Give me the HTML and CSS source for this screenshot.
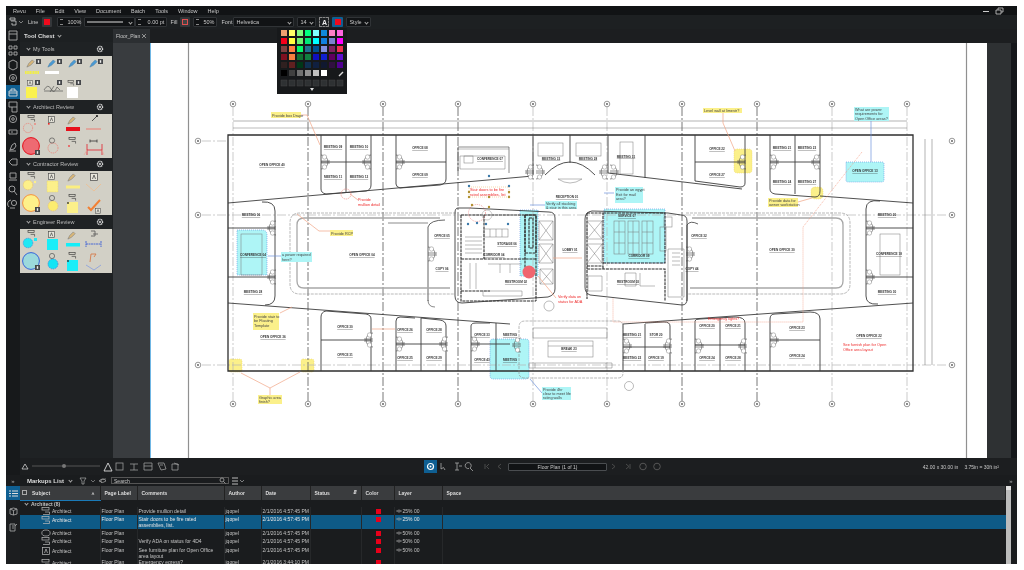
FILE: index.html
```html
<!DOCTYPE html>
<html lang="en">
<head>
<meta charset="utf-8">
<title>Revu</title>
<link rel="stylesheet" href="styles.css">
</head>
<body>
<svg class="defs" width="0" height="0" aria-hidden="true">
  <defs>
    <symbol id="pen" viewBox="0 0 10 10"><path d="M1 9 L3 5 L7 1 L9 3 L5 7Z" fill="#d9b778" stroke="#777" stroke-width=".6"/></symbol>
    <symbol id="penb" viewBox="0 0 10 10"><path d="M1 9 L3 5 L7 1 L9 3 L5 7Z" fill="#4a9ad4" stroke="#4a7fa5" stroke-width=".6"/></symbol>
    <symbol id="callout" viewBox="0 0 10 8"><rect x="1" y=".5" width="7" height="2.5" fill="none" stroke="#333" stroke-width=".7"/><path d="M4 5H8.5V7.5" fill="none" stroke="#333" stroke-width=".7"/></symbol>
    <symbol id="calloutl" viewBox="0 0 10 8"><rect x="1" y=".5" width="7" height="2.5" fill="none" stroke="#bbb" stroke-width=".7"/><path d="M4 5H8.5V7.5H2" fill="none" stroke="#bbb" stroke-width=".7"/></symbol>
    <symbol id="boxa" viewBox="0 0 8 8"><rect x=".5" y=".5" width="7" height="7" fill="#e8e6dc" stroke="#444" stroke-width=".7"/><path d="M2.5 6L4 2L5.5 6" fill="none" stroke="#333" stroke-width=".7"/></symbol>
    <symbol id="boxal" viewBox="0 0 8 8"><rect x=".5" y=".5" width="7" height="7" fill="none" stroke="#bbb" stroke-width=".7"/><path d="M2.5 6L4 2L5.500 6" fill="none" stroke="#bbb" stroke-width=".7"/></symbol>
    <symbol id="badge" viewBox="0 0 5 5"><rect width="5" height="5" fill="#45474a"/><rect x="1.8" y="1.2" width="1.4" height="2.6" fill="#eee"/></symbol>
    <symbol id="door" viewBox="-1 -9 12 18"><path d="M0 -1H9M0 1H9M0 -7A7 7 0 0 1 7 0A7 7 0 0 1 0 7" fill="none" stroke="#444" stroke-width=".6"/><circle cx="3.5" cy="-5" r="2.2" fill="#fff" stroke="#666" stroke-width=".4"/><circle cx="3.5" cy="5" r="2.2" fill="#fff" stroke="#666" stroke-width=".4"/></symbol>
    <symbol id="doorl" viewBox="-11 -9 12 18"><path d="M0 -1H-9M0 1H-9M0 -7A7 7 0 0 0 -7 0A7 7 0 0 0 0 7" fill="none" stroke="#444" stroke-width=".6"/><circle cx="-3.5" cy="-5" r="2.2" fill="#fff" stroke="#666" stroke-width=".4"/><circle cx="-3.5" cy="5" r="2.2" fill="#fff" stroke="#666" stroke-width=".4"/></symbol>
    <symbol id="bubble" viewBox="0 0 8 8"><circle cx="4" cy="4" r="2.8" fill="#fff" stroke="#555" stroke-width=".6"/><circle cx="4" cy="4" r=".9" fill="#555"/></symbol>
    <symbol id="gear" viewBox="0 0 10 10"><circle cx="5" cy="5" r="3.2" fill="none" stroke="#d8d8d8" stroke-width="1.7" stroke-dasharray="1.4 .6"/><circle cx="5" cy="5" r="1.3" fill="#d8d8d8"/></symbol>
    <symbol id="eye" viewBox="0 0 8 5"><path d="M.5 2.5Q4 -1 7.5 2.5Q4 6 .5 2.5Z" fill="none" stroke="#aaa" stroke-width=".7"/><circle cx="4" cy="2.5" r=".9" fill="#aaa"/></symbol>
  </defs>
</svg>

<div class="app">
  <nav class="menubar">
    <span>Revu</span><span>File</span><span>Edit</span><span>View</span><span>Document</span><span>Batch</span><span>Tools</span><span>Window</span><span>Help</span>
    <div class="winctl">
      <svg width="32" height="8" viewBox="0 0 32 8"><path d="M2 4.5H8" stroke="#ccc"/><path d="M15 3H20V7H15ZM17 3V1H22V5H20" fill="none" stroke="#ccc" stroke-width=".8"/></svg>
    </div>
  </nav>

  <div class="toolbar">
    <div class="tbtn w15"><svg width="15" height="10" viewBox="0 0 15 10"><path d="M1 1H6V3H1ZM2 4H7V8H3V6" fill="none" stroke="#ccc" stroke-width=".8"/><path d="M10 4L12 6L14 4" fill="none" stroke="#aaa" stroke-width=".7"/></svg></div>
    <span class="tlabel">Line</span>
    <div class="swatch"><i class="red"></i></div>
    <div class="field w24 push"><b class="step"></b><span>100%</span></div>
    <div class="field w51"><svg width="36" height="4" viewBox="0 0 36 4"><path d="M0 2H36" stroke="#ddd"/></svg><em class="chev"></em></div>
    <div class="field w32 pull"><b class="step"></b><span class="right">0.00 pt</span></div>
    <span class="tlabel tight">Fill</span>
    <div class="swatch"><i class="nofill"></i></div>
    <div class="field w24"><b class="step"></b><span>50%</span></div>
    <span class="tlabel">Font</span>
    <div class="field w61 pull3"><span>Helvetica</span><em class="chev"></em></div>
    <div class="field w19"><span>14</span><em class="chev"></em></div>
    <div class="swatch plain"><strong>A</strong></div>
    <div class="swatch active"><i class="red"></i></div>
    <div class="field w25"><span>Style</span><em class="chev"></em></div>
  </div>

  <div class="workspace">
    <aside class="rail">
      <svg width="14" height="447" viewBox="0 0 14 447">
        <g fill="none" stroke="#aaa" stroke-width=".9">
          <path d="M3 2H11V11H3ZM3 5H11"/><path d="M3 17H6V20H3ZM8 17H11V20H8ZM3 23H6V26H3ZM8 23H11V26H8Z"/>
          <path d="M3 33L7 31L11 33V39L7 41L3 39Z"/><circle cx="7" cy="49" r="3.6"/><circle cx="7" cy="49" r="1.3"/>
        </g>
        <rect y="56" width="14" height="14" fill="#0f5f92"/>
        <path d="M3 62H11V67H3ZM5 62V60H9V62M3 64H11" fill="none" stroke="#ddd" stroke-width=".9"/>
        <g fill="none" stroke="#aaa" stroke-width=".9">
          <path d="M3 73H11V83H6V78H3ZM6 78H11"/><circle cx="7" cy="90" r="3.6"/><circle cx="7" cy="90" r="1.3"/>
          <path d="M3 101H11V105H3ZM5 103H7"/><path d="M4 121L6 116L9 114L10 117L8 120ZM3 122H10"/>
          <path d="M3 133L6 130H11V136H6Z"/><path d="M4 144H10V149H4ZM3 151H11"/>
          <circle cx="6" cy="160" r="3"/><path d="M8 162L11 166"/><circle cx="8" cy="174" r="2.6"/><path d="M3 178A4 4 0 0 1 5 171M4 179H9"/>
        </g>
      </svg>
    </aside>

    <section class="chest">
      <header class="chest-title">Tool Chest<em class="chev light"></em></header>

      <div class="chest-head"><em class="chev light"></em><span>My Tools</span><svg class="gear" viewBox="0 0 10 10"><use href="#gear"/></svg></div>
      <svg class="tools" viewBox="0 0 92 44">
        <use href="#pen" x="6" y="3" width="9" height="9"/><use href="#badge" x="16" y="3" width="5" height="5"/>
        <path d="M5 16.5H19" stroke="#f1ee47" stroke-width="3" stroke-dasharray="1.2 .4"/>
        <use href="#penb" x="27" y="3" width="9" height="9"/><use href="#badge" x="37" y="3" width="5" height="5"/>
        <rect x="25" y="15" width="14" height="3" fill="#fff"/>
        <use href="#penb" x="48" y="3" width="9" height="9"/><use href="#badge" x="57" y="3" width="5" height="5"/>
        <use href="#penb" x="69" y="3" width="9" height="9"/><use href="#badge" x="78" y="3" width="5" height="5"/>
        <use href="#boxa" x="7" y="24" width="6" height="6"/><use href="#badge" x="15" y="24" width="5" height="5"/>
        <rect x="6" y="31" width="11" height="11" fill="#fbf24f"/>
        <path d="M24 34Q28 27 31 33T37 31L40 34M24 35H43M30 36L34 30" fill="none" stroke="#444" stroke-width=".6"/><use href="#badge" x="37" y="24" width="5" height="5"/>
        <use href="#callout" x="47" y="24" width="8" height="6"/><use href="#badge" x="56" y="24" width="5" height="5"/>
        <rect x="47" y="31" width="11" height="11" fill="#fff"/>
      </svg>

      <div class="chest-head"><em class="chev light"></em><span>Architect Review</span><svg class="gear" viewBox="0 0 10 10"><use href="#gear"/></svg></div>
      <svg class="tools" viewBox="0 0 92 44">
        <use href="#callout" x="7" y="1" width="9" height="7"/>
        <circle cx="8" cy="14" r="4.6" fill="none" stroke="#ea8a80" stroke-width=".9" stroke-dasharray="1.4 .7"/><circle cx="15" cy="10" r="1" fill="#ea8a80"/>
        <use href="#boxa" x="28" y="2" width="7" height="7"/><rect x="28" y="9" width="1.6" height="1.6" fill="#e22"/>
        <use href="#pen" x="47" y="2" width="9" height="9"/><rect x="46" y="13" width="14" height="4" fill="#e8101c"/>
        <path d="M77 2L72 7" stroke="#333" stroke-width=".8"/><circle cx="77" cy="2" r="1.1" fill="#222"/><path d="M66 15H81" stroke="#ea8a80" stroke-width="1.2"/>
        <circle cx="11" cy="32" r="8.4" fill="#ee6a72" stroke="#e4101c" stroke-width="1"/><use href="#badge" x="15" y="36" width="5" height="5"/>
        <circle cx="33" cy="34" r="5" fill="none" stroke="#ea8a80" stroke-width=".9" stroke-dasharray="1.4 .7"/><circle cx="32" cy="26.5" r="2.6" fill="none" stroke="#555" stroke-width=".7"/>
        <use href="#callout" x="48" y="23" width="9" height="7"/><circle cx="49" cy="32" r="1" fill="#ea5050"/>
        <path d="M70 27H77M70 25.5V28.500M77 25.5V28.500" stroke="#333" stroke-width=".8"/>
        <path d="M67 30V41M82 30V41M67 36H82" fill="none" stroke="#e2202c" stroke-width=".8"/><path d="M67 36L64 41M82 36L84 41" stroke="#e8a898" stroke-width=".7"/>
      </svg>

      <div class="chest-head"><em class="chev light"></em><span>Contractor Review</span><svg class="gear" viewBox="0 0 10 10"><use href="#gear"/></svg></div>
      <svg class="tools" viewBox="0 0 92 44">
        <use href="#callout" x="7" y="1" width="9" height="7"/>
        <circle cx="8" cy="14" r="4.8" fill="#fdf08a" stroke="#e8c070" stroke-width=".7" stroke-dasharray="1.4 .6"/><circle cx="15" cy="11" r="1.2" fill="#fdf08a"/>
        <use href="#boxa" x="28" y="2" width="7" height="7"/><rect x="27" y="10" width="11" height="11" fill="#fcf08a" stroke="#e8d870" stroke-width=".6" stroke-dasharray="1 .6"/>
        <use href="#pen" x="47" y="2" width="9" height="9"/><path d="M46 16H60" stroke="#fbee80" stroke-width="3"/>
        <use href="#boxa" x="70" y="2" width="8" height="8"/><path d="M66 13L74 20L81 13" fill="none" stroke="#ecbf94" stroke-width=".9"/>
        <circle cx="11" cy="32" r="8.4" fill="#fdf08a" stroke="#f49040" stroke-width="1"/><use href="#badge" x="15" y="36" width="5" height="5"/>
        <circle cx="33" cy="35" r="5" fill="#fcec70" stroke="#e8c070" stroke-width=".6" stroke-dasharray="1.4 .7"/><circle cx="32" cy="27" r="2.6" fill="none" stroke="#555" stroke-width=".7"/>
        <use href="#callout" x="48" y="23" width="9" height="7"/><rect x="47" y="31" width="11" height="11" fill="#fcf08a"/><circle cx="48" cy="32" r=".9" fill="#333"/>
        <path d="M68 36L71 39L80 29" fill="none" stroke="#f28034" stroke-width="2"/><use href="#boxa" x="75" y="37" width="6" height="6"/>
      </svg>

      <div class="chest-head"><em class="chev light"></em><span>Engineer Review</span><svg class="gear" viewBox="0 0 10 10"><use href="#gear"/></svg></div>
      <svg class="tools" viewBox="0 0 92 44">
        <use href="#callout" x="7" y="1" width="9" height="7"/>
        <circle cx="8" cy="14" r="4.8" fill="#1fe8f4" stroke="#3a70d8" stroke-width=".5" stroke-dasharray="1.4 .6"/><rect x="14" y="9" width="3" height="3" fill="#1fe8f4"/>
        <use href="#boxa" x="28" y="2" width="7" height="7"/><rect x="27" y="10" width="11" height="11" fill="#18eef8"/>
        <use href="#pen" x="47" y="2" width="9" height="9"/><rect x="46" y="14" width="14" height="3.500" fill="#14eef8"/>
        <path d="M71 2H75V7H71M73 5H78" fill="none" stroke="#555" stroke-width=".8"/><path d="M66 12V18M81 12V18M66 15H81" fill="none" stroke="#2a50d8" stroke-width=".8" stroke-dasharray="2 .5"/>
        <circle cx="11" cy="32" r="8.4" fill="#9cd9dc" stroke="#3564da" stroke-width="1"/><use href="#badge" x="15" y="36" width="5" height="5"/>
        <circle cx="33" cy="35" r="5" fill="#14e4f4" stroke="#3a70d8" stroke-width=".6" stroke-dasharray="1.4 .7"/><circle cx="32" cy="27" r="2.6" fill="none" stroke="#555" stroke-width=".7"/>
        <use href="#callout" x="48" y="23" width="9" height="7"/><rect x="47" y="31" width="11" height="11" fill="#18eef8"/><circle cx="48" cy="32" r=".9" fill="#333"/>
        <path d="M70 33L71 25H76L74 28" fill="none" stroke="#d67b4a" stroke-width=".9"/><path d="M66 36L74 41L81 36" fill="none" stroke="#8fa3dc" stroke-width=".9"/>
      </svg>

      <div class="zoom-slider">
        <svg width="93" height="17" viewBox="0 0 93 17"><path d="M2 11L5 6L8 11Z" fill="none" stroke="#ccc" stroke-width=".8"/><path d="M12 8H80" stroke="#555" stroke-width="1"/><circle cx="44" cy="8" r="2" fill="#777"/><path d="M84 13L88 5L92 13Z" fill="none" stroke="#ddd" stroke-width=".9"/></svg>
      </div>
    </section>

    <section class="center">
      <div class="tabs"><div class="tab"><span>Floor_Plan</span><svg width="6" height="6" viewBox="0 0 6 6"><path d="M1 1L5 5M5 1L1 5" stroke="#bbb" stroke-width=".7"/></svg></div></div>
      <div class="viewer">
        <div class="gutter"></div>
        <svg class="plan" viewBox="150 42 837 416">
          <rect x="150" y="42" width="837" height="416" fill="#fff"/>
          <path d="M150.500 42V458" stroke="#6fb6e4"/>
          <path d="M188.500 42V458M966.500 42V458" stroke="#909090" stroke-width="1.200"/>

          <!-- highlight regions under the drawing -->
          <g class="m-cyan">
            <path d="M237 229H262Q267 229 267 234V274H237Z"/>
            <path d="M846 161H882Q884 161 884 163V179Q884 181 882 181H848Q846 181 846 179Z"/>
            <rect x="520" y="209" width="18" height="66"/>
            <path d="M604 208H665V262H604Z"/>
            <rect x="490" y="338" width="39" height="40" rx="3"/>
          </g>
          <g class="m-yellow">
            <rect x="734" y="148" width="18" height="24" rx="3"/>
            <rect x="811" y="186" width="12" height="12" rx="4"/>
            <rect x="229" y="358" width="13" height="13" rx="2"/>
            <rect x="301" y="358" width="13" height="13" rx="2"/>
          </g>

          <!-- grid -->
          <g class="grid-dark">
            <path d="M308 106V400M383 106V400M458 106V400M682 106V400M757 106V400"/>
          </g>
          <g class="grid-light">
            <path d="M233 106V400M533 106V400M607 106V400M832 106V400M907 106V400"/>
            <path d="M202 140H228M202 214H948M202 364H948"/>
          </g>
          <g class="thin">
            <path d="M233 120H907" stroke="#666"/><path d="M233 127H907"/>
            <path d="M925 138V364M932 138V364" stroke="#666"/>
          </g>
          <g>
            <use href="#bubble" x="229" y="99" width="8" height="8"/><use href="#bubble" x="304" y="99" width="8" height="8"/><use href="#bubble" x="379" y="99" width="8" height="8"/><use href="#bubble" x="454" y="99" width="8" height="8"/><use href="#bubble" x="529" y="99" width="8" height="8"/><use href="#bubble" x="603" y="99" width="8" height="8"/><use href="#bubble" x="678" y="99" width="8" height="8"/><use href="#bubble" x="753" y="99" width="8" height="8"/><use href="#bubble" x="828" y="99" width="8" height="8"/><use href="#bubble" x="903" y="99" width="8" height="8"/>
            <use href="#bubble" x="229" y="399" width="8" height="8"/><use href="#bubble" x="304" y="399" width="8" height="8"/><use href="#bubble" x="379" y="399" width="8" height="8"/><use href="#bubble" x="454" y="399" width="8" height="8"/><use href="#bubble" x="529" y="399" width="8" height="8"/><use href="#bubble" x="603" y="399" width="8" height="8"/><use href="#bubble" x="678" y="399" width="8" height="8"/><use href="#bubble" x="753" y="399" width="8" height="8"/><use href="#bubble" x="828" y="399" width="8" height="8"/><use href="#bubble" x="903" y="399" width="8" height="8"/>
            <use href="#bubble" x="194" y="136" width="8" height="8"/><use href="#bubble" x="194" y="210" width="8" height="8"/><use href="#bubble" x="194" y="360" width="8" height="8"/>
            <use href="#bubble" x="948" y="136" width="8" height="8"/><use href="#bubble" x="948" y="210" width="8" height="8"/><use href="#bubble" x="948" y="360" width="8" height="8"/>
          </g>

          <!-- shell -->
          <path class="wall-heavy" d="M228 134H913V370H228Z"/>
          <g class="wall">
            <path d="M228 202L533 175M608 172L742 188M820 195L913 202"/>
            <path d="M228 302L510 323M623 323L913 302"/>
            <path d="M321 134V188Q321 192 326 193L366 190Q371 189 371 184V134M346 134V191M321 161H371"/>
            <path d="M396 134V183Q396 186 400 187L440 184Q446 183 446 178V134M396 161H446"/>
            <path d="M458 146H509M458 146V170M509 146V172" stroke-width=".6"/>
            <path d="M533 134V174M570 134V162M608 134V172M645 134V177"/>
            <path d="M545 174Q570 148 595 174"/>
            <path d="M695 134V180L740 186Q745 186 745 182V134M695 161H745"/>
            <path d="M770 134V188Q770 192 775 193L815 196Q820 196 820 190V134M795 134V193M770 161H820"/>
            <path d="M228 227H275M228 276H275M262 201Q275 200 275 210V295Q275 304 265 304"/>
            <path d="M880 200Q866 198 866 208V295Q866 304 878 303M866 227H913M866 276H913"/>
            <path d="M321 370V316Q321 311 326 310L366 313Q371 314 371 318V370M321 339H371"/>
            <path d="M396 370V320Q396 316 400 316L415 317M421 317V370M396 343H446M446 370V325Q446 320 440 319L421 317"/>
            <path d="M471 370V325Q471 322 476 322H490M496 322V370M471 343H510"/>
            <path d="M623 370V323M645 323V370M670 370V325Q670 321 664 321L645 322M623 346H670"/>
            <path d="M695 370V320Q695 318 700 318L735 316Q745 316 745 322V370M720 317V370M695 344H745"/>
            <path d="M770 370V318Q770 313 775 313L810 311Q820 311 820 318V370M770 339H820"/>
            <path d="M698 223Q690 219 687 224V300M445 219Q430 219 428 226V300" stroke-width=".8"/>
            <path d="M428 222H388M428 299Q428 306 435 306" stroke-width=".6"/>
          </g>
          <path class="inner-ring" d="M440 217H304Q297 217 297 224V280Q297 287 304 287H450M692 217H836Q843 217 843 224V280Q843 287 836 287H690"/>
          <path class="ring" d="M456 212H300Q290 212 290 222V283Q290 293 300 293H455M686 212H840Q850 212 850 222V283Q850 293 840 293H688M519 372V326Q519 320 525 320H618Q623 320 623 326V372Q623 377 618 377H525Q519 377 519 372"/>

          <!-- doors -->
          <g>
            <use href="#door" x="320" y="152" width="12" height="18"/><use href="#doorl" x="360" y="152" width="12" height="18"/>
            <use href="#door" x="395" y="152" width="12" height="18"/><use href="#doorl" x="735" y="152" width="12" height="18"/>
            <use href="#door" x="769" y="152" width="12" height="18"/><use href="#doorl" x="809" y="152" width="12" height="18"/>
            <use href="#door" x="427" y="244" width="12" height="18"/><use href="#doorl" x="265" y="218" width="12" height="18"/>
            <use href="#doorl" x="265" y="267" width="12" height="18"/><use href="#door" x="865" y="218" width="12" height="18"/>
            <use href="#door" x="865" y="267" width="12" height="18"/><use href="#door" x="685" y="244" width="12" height="18"/>
            <use href="#doorl" x="362" y="330" width="12" height="18"/><use href="#door" x="395" y="334" width="12" height="18"/>
            <use href="#doorl" x="437" y="334" width="12" height="18"/><use href="#door" x="470" y="334" width="12" height="18"/>
            <use href="#door" x="622" y="336" width="12" height="18"/><use href="#doorl" x="661" y="336" width="12" height="18"/>
            <use href="#door" x="694" y="336" width="12" height="18"/><use href="#doorl" x="736" y="336" width="12" height="18"/>
            <use href="#door" x="769" y="330" width="12" height="18"/><use href="#doorl" x="510" y="335" width="12" height="18"/>
            <use href="#doorl" x="523" y="162" width="12" height="18"/><use href="#door" x="535" y="162" width="12" height="18"/>
            <use href="#doorl" x="597" y="162" width="12" height="18"/><use href="#door" x="609" y="162" width="12" height="18"/>
          </g>

          <!-- conference 07, north rooms & reception arc -->
          <g class="thin">
            <path d="M460 155H505V168H460ZM459 148H509"/>
            <rect x="464" y="155" width="9" height="7"/>
            <rect x="538" y="142" width="25" height="13"/>
            <rect x="576" y="142" width="25" height="13"/>
            <rect x="620" y="141" width="13" height="32"/>
            <path d="M558 178H582Q570 186 558 178Z"/>
            <rect x="241" y="233" width="21" height="41"/>
            <rect x="880" y="233" width="20" height="41"/>
          </g>
          <!-- left core -->
          <g class="wall">
            <path d="M458 207Q455 207 455 212V295Q455 302 462 302L548 296Q555 294 555 288V217Q555 211 549 211L470 207Z"/>
          </g>
          <g class="wall-heavy dash">
            <path d="M461 214H536V300M461 214V300H536M484 214V258M461 258H536M525 214V275M525 214H536M461 290H490"/>
            <rect x="525" y="214" width="11" height="38"/>
            <rect x="529" y="217" width="4" height="30"/>
          </g>
          <g class="thin">
            <path d="M539 220H553V239H539ZM539 220L553 239M553 220L539 239M539 243H553V262H539ZM539 243L553 262M553 243L539 262"/>
            <path d="M540 268H553V283H540ZM540 268L553 283M553 268L540 283"/>
            <path d="M465 236H482M465 240H482M465 244H482M465 248H482M465 252H482"/>
            <rect x="484" y="228" width="24" height="8"/>
            <path d="M490 228V236M496 228V236M502 228V236"/>
            <path d="M470 262V288M476 262V288M488 263H522M500 263V272M510 263V272"/>
            <path d="M483 290H522V295H483Z"/>
          </g>
          <circle cx="487" cy="214" r="5" fill="none" stroke="#999" stroke-width=".5"/>
          <!-- right core -->
          <g class="wall">
            <path d="M592 210Q585 211 585 218V286Q585 292 590 294L682 304Q687 304 687 298V220Q687 214 681 214L668 212Z"/>
          </g>
          <g class="wall-heavy dash">
            <path d="M587 212H603V268M587 212V298M603 212H665V262H603M587 265H603M587 268H665V300"/>
          </g>
          <g class="thin">
            <path d="M587 220H602V238H587ZM587 220L602 238M602 220L587 238M587 243H602V262H587ZM587 243L602 262M602 243L587 262"/>
            <path d="M588 275H602V290H588Z"/>
            <rect x="614" y="220" width="11" height="33"/><rect x="628" y="220" width="11" height="33"/><rect x="642" y="220" width="11" height="33"/>
            <path d="M614 231H625M614 242H625M628 231H639M628 242H639M642 231H653M642 242H653M619 220V253M633 220V253M647 220V253"/>
            <path d="M625 272H636V285H625ZM640 272V285H655"/>
            <rect x="660" y="226" width="6" height="24"/>
            <path d="M668 248H684V296H668ZM672 252H680M672 256H680M672 260H680M672 264H680"/>
            <rect x="664" y="216" width="8" height="10"/>
          </g>
          <!-- lobby centre -->
          <g class="thin">
            <rect x="533" y="327" width="74" height="10"/>
            <rect x="548" y="340" width="45" height="16"/>
            <path d="M548 345H593"/>
            <path d="M529 362H612V367H529ZM535 362V367M606 362V367"/>
            <circle cx="629" cy="385" r="4.500"/>
            <circle cx="549" cy="305" r="5"/>
          </g>

          <!-- room labels -->
          <g class="lbl">
            <text x="272" y="165">OPEN OFFICE 40</text>
            <text x="333" y="147">MEETING 09</text><text x="359" y="147">MEETING 10</text>
            <text x="333" y="177">MEETING 11</text><text x="359" y="177">MEETING 12</text>
            <text x="420" y="148">OFFICE 08</text><text x="420" y="175">OFFICE 09</text>
            <text x="490" y="159">CONFERENCE 07</text>
            <text x="551" y="158.500">MEETING 33</text><text x="588" y="158.500">MEETING 28</text><text x="626" y="156.500">MEETING 31</text>
            <text x="251" y="215">MEETING 06</text><text x="253" y="255">CONFERENCE 04</text><text x="253" y="292">MEETING 28</text>
            <text x="362" y="255">OPEN OFFICE 04</text>
            <text x="442" y="236">OFFICE 05</text><text x="442" y="269">COPY 06</text>
            <text x="273" y="337">OPEN OFFICE 36</text>
            <text x="345" y="327">OFFICE 30</text><text x="345" y="355">OFFICE 31</text>
            <text x="405" y="330">OFFICE 26</text><text x="434" y="330">OFFICE 28</text>
            <text x="405" y="358">OFFICE 25</text><text x="434" y="358">OFFICE 29</text>
            <text x="482" y="335">OFFICE 33</text><text x="510" y="335">MEETING</text>
            <text x="482" y="360">OFFICE 43</text><text x="510" y="360">MEETING</text>
            <text x="569" y="349">BREAK 23</text>
            <text x="632" y="335">MEETING 21</text><text x="656" y="335">STOR 20</text>
            <text x="632" y="358">MEETING 22</text><text x="656" y="358">OFFICE 19</text>
            <text x="707" y="326">OFFICE 20</text><text x="733" y="326">OFFICE 21</text>
            <text x="707" y="358">OFFICE 24</text><text x="733" y="358">OFFICE 28</text>
            <text x="797" y="328">OFFICE 23</text><text x="797" y="356">OFFICE 24</text>
            <text x="869" y="336">OPEN OFFICE 22</text>
            <text x="865" y="171">OPEN OFFICE 13</text>
            <text x="717" y="149">OFFICE 22</text><text x="717" y="175">OFFICE 27</text>
            <text x="782" y="148">MEETING 21</text><text x="807" y="148">MEETING 23</text>
            <text x="782" y="182">MEETING 24</text><text x="807" y="182">MEETING 27</text>
            <text x="887" y="215">MEETING 20</text><text x="887" y="292">MEETING 30</text><text x="782" y="250">OPEN OFFICE 30</text>
            <text x="699" y="236">OFFICE 32</text><text x="692" y="269">COPY 44</text>
            <text x="889" y="254">CONFERENCE 18</text>
            <text x="567" y="197">RECEPTION 01</text><text x="570" y="250">LOBBY 01</text>
            <text x="627" y="216">SERVICE 07</text><text x="507" y="244">STORAGE 06</text>
            <text x="494" y="255">CORRIDOR 04</text><text x="516" y="282">RESTROOM 02</text>
            <text x="639" y="256">CORRIDOR 09</text><text x="628" y="282">RESTROOM 03</text>
          </g>

          <!-- leaders -->
          <g class="lead">
            <path d="M301 114H307L320 144"/><path d="M330 230H319L297 213"/>
            <path d="M358 199L350 193"/><path d="M280 312L292 306"/>
            <path d="M241 372L270 387L300 371M270 387V394"/>
            <path d="M723 111V122L735 150"/><path d="M798 201L812 197"/>
            <path d="M372 328H395M553 257H582"/>
            <path d="M538 275L556 297"/>
          </g>
          <path class="dotted" d="M862 151L803 226V321H613V297"/>
          <path class="blue-lead" d="M871 120V161M281 255H268M614 192H604M545 204H530M542 392L530 378"/>

          <!-- cloud markups -->
          <circle class="cloud" cx="346" cy="193" r="5"/>
          <circle cx="529" cy="271" r="6.500" fill="#f0666f"/>

          <!-- selected -->
          <g class="handles">
            <circle cx="477" cy="212" r="8.500" fill="none" stroke="#e0504e" stroke-width=".5" stroke-dasharray="1 1"/>
            <rect x="469" y="186" width="40" height="10" fill="none" stroke="#e9b15a" stroke-width=".5" stroke-dasharray="1 1"/>
            <circle cx="469" cy="185" r="1.200" fill="#3a78a8"/><circle cx="489" cy="175" r="1.200" fill="#3a78a8"/><circle cx="509" cy="185" r="1.200" fill="#3a78a8"/>
            <circle cx="469" cy="191" r="1.200" fill="#b09030"/><circle cx="509" cy="191" r="1.200" fill="#b09030"/>
            <circle cx="469" cy="196" r="1.200" fill="#b09030"/><circle cx="489" cy="196" r="1.200" fill="#b09030"/><circle cx="509" cy="196" r="1.200" fill="#b09030"/>
            <circle cx="472" cy="204" r="1.200" fill="#b09030"/><circle cx="489" cy="206" r="1.200" fill="#b09030"/><circle cx="477" cy="222" r="1.200" fill="#3a78a8"/><circle cx="468" cy="223" r="1.200" fill="#3a78a8"/><circle cx="486" cy="223" r="1.200" fill="#3a78a8"/><circle cx="508" cy="223" r="1.200" fill="#3a78a8"/>
          </g>

          <!-- notes -->
          <rect class="n-y" x="271" y="111" width="30" height="6"/>
          <text class="note" x="272" y="115.500">Provide box Drape</text>
          <rect class="n-y" x="330" y="229" width="23" height="6"/>
          <text class="note" x="331" y="233.500">Provide RCP</text>
          <rect class="n-c" x="281" y="251" width="31" height="10"/>
          <text class="note" x="282" y="255">a power required</text><text class="note" x="282" y="259.500">here?</text>
          <rect class="n-y" x="253" y="312" width="26" height="17"/>
          <text class="note" x="254" y="316.500">Provide stair to</text><text class="note" x="254" y="321">be Floating</text><text class="note" x="254" y="325.500">Template</text>
          <rect class="n-y" x="258" y="394" width="24" height="9"/>
          <text class="note" x="259" y="398">Graphic area</text><text class="note" x="259" y="402">finish?</text>
          <rect class="n-y" x="703" y="107" width="39" height="5"/>
          <text class="note" x="704" y="111">Level wall at limestr?</text>
          <rect class="n-c" x="854" y="106" width="35" height="14"/>
          <text class="note" x="855" y="109.500">What are power</text><text class="note" x="855" y="114">requirements for</text><text class="note" x="855" y="118.500">Open Office areas?</text>
          <rect class="n-y" x="768" y="197" width="30" height="9"/>
          <text class="note" x="769" y="200.500">Provide data for</text><text class="note" x="769" y="205">owner workstation</text>
          <rect class="n-c" x="545" y="200" width="32" height="8"/>
          <text class="note" x="546" y="203.500">Verify all stacking</text><text class="note" x="546" y="207.500">&amp; stair in this area</text>
          <rect class="n-c" x="615" y="186" width="28" height="16"/>
          <text class="note" x="616" y="190">Provide an egypt</text><text class="note" x="616" y="194.500">Exit for mail</text><text class="note" x="616" y="199">area?</text>
          <rect class="n-c" x="542" y="386" width="29" height="13"/>
          <text class="note" x="543" y="389.500">Provide 4hr</text><text class="note" x="543" y="393.500">clear to meet life</text><text class="note" x="543" y="397.500">rating walls</text>

          <g class="note-red">
            <text x="358" y="200">Provide</text><text x="358" y="205">mullion detail</text>
            <text x="470" y="190">Stair doors to be fire</text><text x="470" y="194.500">rated assemblies, list</text>
            <text x="558" y="297">Verify data on</text><text x="558" y="302">status for ADA</text>
            <text x="708" y="319">Emergency lights?</text>
            <text x="843" y="345">See furnish plan for Open</text><text x="843" y="350">Office area layout</text>
          </g>
        </svg>
        <div class="siderail"></div>
      </div>
      <div class="statusbar">
        <svg class="doc-tools" width="66" height="10" viewBox="0 0 66 10">
          <g fill="none" stroke="#999" stroke-width=".8"><rect x="1" y="1" width="7" height="7"/><path d="M15 2H23M19 2V8M15 8H23"/><path d="M29 1H37V8H29ZM29 4H37"/><path d="M43 1H49L51 7L46 8ZM45 3H48"/><path d="M57 2H63V8H57ZM59 1L64 3"/></g>
        </svg>
        <div class="hand"><svg width="9" height="9" viewBox="0 0 9 9"><circle cx="4.500" cy="4.500" r="3" fill="none" stroke="#fff" stroke-width="1.200"/><circle cx="4.500" cy="4.500" r="1" fill="#fff"/></svg></div>
        <svg class="nav-tools" width="40" height="11" viewBox="0 0 40 11"><path d="M4 2V8L6.500 6.500L8 9M18 2H22M20 2V9M18 9H22M22 5H25M33 7A3 3 0 1 0 32 7.500M33 7L36 10" fill="none" stroke="#aaa" stroke-width=".8"/></svg>
        <svg class="nav-prev" width="24" height="9" viewBox="0 0 24 9"><path d="M4 2V7M8 2L5.500 4.500L8 7M20 2L17 4.500L20 7" fill="none" stroke="#555" stroke-width=".8"/></svg>
        <div class="pagebox">Floor Plan (1 of 1)</div>
        <svg class="nav-next" width="56" height="9" viewBox="0 0 56 9"><path d="M5 2L8 4.500L5 7M19 2L22 4.500L19 7M23 2V7" fill="none" stroke="#555" stroke-width=".8"/><circle cx="36" cy="4.500" r="3.300" fill="none" stroke="#555"/><circle cx="50" cy="4.500" r="3.300" fill="none" stroke="#555"/></svg>
        <div class="dims"><span>42.00 x 30.00 in</span><span>3.75in = 30ft  in²</span></div>
      </div>
    </section>
  </div>

  <section class="markups">
    <div class="mbar">
      <span class="collapse">»</span>
      <strong>Markups List</strong><em class="chev light"></em>
      <svg class="ftools" width="28" height="8" viewBox="0 0 28 8"><path d="M1 1H7L5 4V7H3V4ZM23 6Q19 2 27 2M20 4Q24 0 27 4Q24 7 20 4" fill="none" stroke="#aaa" stroke-width=".7"/><path d="M12 3L14 5L16 3" fill="none" stroke="#aaa" stroke-width=".6"/></svg>
      <div class="search"><span>Search</span><svg width="7" height="7" viewBox="0 0 7 7"><circle cx="3" cy="3" r="2" fill="none" stroke="#aaa" stroke-width=".8"/><path d="M4.500 4.500L6.500 6.500" stroke="#aaa" stroke-width=".8"/></svg></div>
      <svg width="14" height="8" viewBox="0 0 14 8"><path d="M1 1H7M1 4H7M1 7H7" stroke="#bbb"/><path d="M9 3L11 5L13 3" fill="none" stroke="#aaa" stroke-width=".7"/></svg>
      <span class="collapse end">»</span>
    </div>
    <div class="mbody">
      <div class="mrail">
        <div class="mrail-on"><svg width="9" height="7" viewBox="0 0 9 7"><path d="M0 1H2M3 1H9M0 3.500H2M3 3.500H9M0 6H2M3 6H9" stroke="#ddd"/></svg></div>
        <svg width="9" height="9" viewBox="0 0 9 9"><path d="M1 2L4.500 1L8 2V7L4.500 8L1 7ZM1 2L4.500 3.500L8 2M4.500 3.500V8" fill="none" stroke="#aaa" stroke-width=".8"/></svg>
        <svg width="9" height="9" viewBox="0 0 9 9"><path d="M1 1H6V8H1ZM6 3L8 1M3 3H5M3 5H5" fill="none" stroke="#aaa" stroke-width=".8"/></svg>
      </div>
      <div class="tablewrap">
        <table class="list">
          <colgroup><col class="c-subj"><col class="c-page"><col class="c-com"><col class="c-auth"><col class="c-date"><col class="c-stat"><col class="c-color"><col class="c-layer"><col></colgroup>
          <thead>
            <tr><th><span class="box"></span>Subject<em class="sort">^</em></th><th>Page Label</th><th>Comments</th><th>Author</th><th>Date</th><th>Status<em class="statusicon">⇵</em></th><th>Color</th><th>Layer</th><th>Space</th></tr>
          </thead>
          <tbody>
            <tr class="group"><td colspan="9"><em class="chev light"></em>Architect (8)</td></tr>
            <tr class="r8"><td class="sub"><svg class="ic" viewBox="0 0 10 8"><use href="#calloutl"/></svg>Architect</td><td>Floor Plan</td><td>Provide mullion detail</td><td>jqopel</td><td>2/1/2016 4:57:45 PM</td><td></td><td><i class="dot"></i></td><td><svg width="6" height="4" viewBox="0 0 8 5"><use href="#eye"/></svg>25% 00</td><td></td></tr>
            <tr class="sel"><td class="sub"><svg class="ic" viewBox="0 0 10 8"><use href="#calloutl"/></svg>Architect</td><td>Floor Plan</td><td>Stair doors to be fire rated assemblies, list.</td><td>jqopel</td><td>2/1/2016 4:57:45 PM</td><td></td><td><i class="dot"></i></td><td><svg width="6" height="4" viewBox="0 0 8 5"><use href="#eye"/></svg>25% 00</td><td></td></tr>
            <tr class="r8"><td class="sub"><svg class="ic" viewBox="0 0 10 8"><ellipse cx="5" cy="4" rx="4.200" ry="3" fill="none" stroke="#bbb" stroke-width=".7"/></svg>Architect</td><td>Floor Plan</td><td></td><td>jqopel</td><td>2/1/2016 4:57:45 PM</td><td></td><td><i class="dot"></i></td><td><svg width="6" height="4" viewBox="0 0 8 5"><use href="#eye"/></svg>50% 00</td><td></td></tr>
            <tr class="r8"><td class="sub"><svg class="ic" viewBox="0 0 10 8"><use href="#calloutl"/></svg>Architect</td><td>Floor Plan</td><td>Verify ADA on status for 4D4</td><td>jqopel</td><td>2/1/2016 4:57:45 PM</td><td></td><td><i class="dot"></i></td><td><svg width="6" height="4" viewBox="0 0 8 5"><use href="#eye"/></svg>50% 00</td><td></td></tr>
            <tr class="r14"><td class="sub"><svg class="ic" viewBox="0 0 10 8"><use href="#boxal"/></svg>Architect</td><td>Floor Plan</td><td>See furniture plan for Open Office area layout</td><td>jqopel</td><td>2/1/2016 4:57:45 PM</td><td></td><td><i class="dot"></i></td><td><svg width="6" height="4" viewBox="0 0 8 5"><use href="#eye"/></svg>50% 00</td><td></td></tr>
            <tr class="r6"><td class="sub"><svg class="ic" viewBox="0 0 10 8"><use href="#calloutl"/></svg>Architect</td><td>Floor Plan</td><td>Emergency egress?</td><td>jqopel</td><td>2/1/2016 3:44:10 PM</td><td></td><td><i class="dot"></i></td><td></td><td></td></tr>
          </tbody>
        </table>
        <div class="vscroll"></div>
      </div>
    </div>
  </section>
</div>
<svg class="palette" width="70" height="66" viewBox="0 0 70 66">
  <rect width="70" height="66" fill="#17191b"/>
  <g>
    <rect x="4" y="2" width="6" height="6" fill="#ef9f70"/><rect x="12" y="2" width="6" height="6" fill="#ffff66"/><rect x="20" y="2" width="6" height="6" fill="#80f880"/><rect x="28" y="2" width="6" height="6" fill="#00ff80"/><rect x="36" y="2" width="6" height="6" fill="#80ffff"/><rect x="44" y="2" width="6" height="6" fill="#1088dc"/><rect x="52" y="2" width="6" height="6" fill="#ff80c8"/><rect x="60" y="2" width="6" height="6" fill="#ff66e0"/>
    <rect x="4" y="10" width="6" height="6" fill="#f5001a"/><rect x="12" y="10" width="6" height="6" fill="#ffff40"/><rect x="20" y="10" width="6" height="6" fill="#70f070"/><rect x="28" y="10" width="6" height="6" fill="#00e878"/><rect x="36" y="10" width="6" height="6" fill="#00ffff"/><rect x="44" y="10" width="6" height="6" fill="#1080e0"/><rect x="52" y="10" width="6" height="6" fill="#7c80d0"/><rect x="60" y="10" width="6" height="6" fill="#ff00ff"/>
    <rect x="4" y="18" width="6" height="6" fill="#804040"/><rect x="12" y="18" width="6" height="6" fill="#ff8040"/><rect x="20" y="18" width="6" height="6" fill="#00f868"/><rect x="28" y="18" width="6" height="6" fill="#207090"/><rect x="36" y="18" width="6" height="6" fill="#005090"/><rect x="44" y="18" width="6" height="6" fill="#8090e0"/><rect x="52" y="18" width="6" height="6" fill="#802060"/><rect x="60" y="18" width="6" height="6" fill="#f03050"/>
    <rect x="4" y="26" width="6" height="6" fill="#801020"/><rect x="12" y="26" width="6" height="6" fill="#f88040"/><rect x="20" y="26" width="6" height="6" fill="#107030"/><rect x="28" y="26" width="6" height="6" fill="#108040"/><rect x="36" y="26" width="6" height="6" fill="#1010c0"/><rect x="44" y="26" width="6" height="6" fill="#1020d0"/><rect x="52" y="26" width="6" height="6" fill="#600060"/><rect x="60" y="26" width="6" height="6" fill="#6010d0"/>
    <rect x="4" y="34" width="6" height="6" fill="#302020"/><rect x="12" y="34" width="6" height="6" fill="#602020"/><rect x="20" y="34" width="6" height="6" fill="#003818"/><rect x="28" y="34" width="6" height="6" fill="#103050"/><rect x="36" y="34" width="6" height="6" fill="#102040"/><rect x="44" y="34" width="6" height="6" fill="#101830"/><rect x="52" y="34" width="6" height="6" fill="#301040"/><rect x="60" y="34" width="6" height="6" fill="#500090"/>
    <rect x="4" y="42" width="6" height="6" fill="#000"/><rect x="12" y="42" width="6" height="6" fill="#404040"/><rect x="20" y="42" width="6" height="6" fill="#707070"/><rect x="28" y="42" width="6" height="6" fill="#909090"/><rect x="36" y="42" width="6" height="6" fill="#c0c0c0"/><rect x="44" y="42" width="6" height="6" fill="#fff"/>
    <path d="M62 48L66 44" stroke="#ddd" stroke-width="1.400"/>
  </g>
  <g fill="#2e3133" stroke="#444" stroke-width=".5">
    <rect x="4" y="52" width="6" height="6"/><rect x="12" y="52" width="6" height="6"/><rect x="20" y="52" width="6" height="6"/><rect x="28" y="52" width="6" height="6"/><rect x="36" y="52" width="6" height="6"/><rect x="44" y="52" width="6" height="6"/><rect x="52" y="52" width="6" height="6"/><rect x="60" y="52" width="6" height="6"/>
  </g>
  <path d="M33 60H37L35 63Z" fill="#ddd"/>
</svg>
</body>
</html>
```
FILE: styles.css
```css
* { box-sizing: border-box; }
html, body { margin: 0; height: 100%; overflow: hidden; background: #fff; }
body { position: relative; font-family: "Liberation Sans", Arial, sans-serif; font-size: 5.5px; color: #c8c8c8; }
.defs { position: absolute; }
.app { width: 1011px; height: 558px; margin: 6px 0 0 6px; display: flex; flex-direction: column; background: #1c1e20; filter: blur(.45px); }

.menubar { height: 9px; flex: none; display: flex; align-items: center; gap: 10px; padding-left: 7px; background: #111315; font-size: 5.5px; }
.winctl { margin-left: auto; padding-right: 4px; display: flex; }

.toolbar { height: 14px; flex: none; display: flex; align-items: center; gap: 3px; padding-left: 3px; background: #1d2022; }
.tlabel { margin: 0 1px; }
.tlabel.tight { margin: 0; }
.tbtn { display: flex; }
.w15 { width: 15px; }
.w19 { width: 19px; } .w24 { width: 24px; } .w25 { width: 25px; } .w32 { width: 32px; } .w51 { width: 51px; } .w61 { width: 61px; }
.push { margin-left: 2px; }
.pull { margin-left: -3px; }
.pull3 { margin-left: -3px; }
.swatch { width: 10px; height: 10px; display: flex; align-items: center; justify-content: center; background: #34373a; border-radius: 1px; }
.swatch i { display: block; width: 6px; height: 6px; }
.swatch .red { background: #ef0a1c; }
.swatch .nofill { border: 1px solid #e05050; background: #444; }
.swatch.active { width: 11px; background: #0f5f92; }
.swatch strong { font-size: 7px; color: #eee; }
.swatch.plain { border: 1px dashed #888; background: none; }
.field { height: 10px; display: flex; align-items: center; gap: 2px; padding: 0 2px; background: #111315; border: 1px solid #303336; border-radius: 1px; position: relative; }
.field .right { margin-left: auto; }
.step { width: 3px; height: 6px; border-top: 1px solid #888; border-bottom: 1px solid #888; flex: none; margin-right: 2px; }
.chev { display: inline-block; flex: none; width: 3px; height: 3px; margin-left: auto; border-right: .7px solid #aaa; border-bottom: .7px solid #aaa; transform: rotate(45deg); }
.chev.light { margin: 0 3px 1px 3px; }

.workspace { flex: 1; min-height: 0; display: flex; }
.rail { width: 14px; flex: none; background: #17191b; }
.chest { width: 93px; flex: none; display: flex; flex-direction: column; background: #1f2224; position: relative; }
.chest-title { height: 13.33px; flex: none; display: flex; align-items: center; padding-left: 4px; font-size: 6px; font-weight: bold; color: #ddd; background: #1d2022; }
.chest-head { height: 13.67px; flex: none; display: flex; align-items: center; padding-left: 4px; color: #bbb; font-size: 5.5px; }
.chest-head .gear { width: 8px; height: 8px; margin-left: auto; margin-right: 9px; }
.tools { display: block; width: 92px; height: 44px; flex: none; background: #d2d0c6; }
.zoom-slider { margin-top: auto; height: 17px; background: #1c1e20; }

.center { flex: 1; min-width: 0; display: flex; flex-direction: column; }
.tabs { height: 14px; flex: none; background: #1c1e20; display: flex; }
.tab { width: 37px; display: flex; align-items: center; justify-content: space-between; padding: 0 3px; background: #2c2f32; font-size: 5px; }
.viewer { flex: 1; min-height: 0; display: flex; }
.gutter { width: 37px; flex: none; background: #393c3f; }
.plan { display: block; width: 837px; height: 416px; flex: none; }
.siderail { flex: 1; background: #2e3133; border-right: 6px solid #15171a; }

.statusbar { height: 17px; flex: none; display: flex; align-items: center; background: #1c1e20; }
.doc-tools { flex: none; margin-left: 2px; margin-right: 243px; }
.hand { width: 13px; height: 13px; flex: none; display: flex; align-items: center; justify-content: center; background: #0f5f92; }
.nav-tools, .nav-prev, .nav-next { flex: none; }
.nav-prev { margin-left: 4px; margin-right: 3px; }
.pagebox { width: 99px; height: 8px; flex: none; line-height: 6px; text-align: center; border: 1px solid #4a4d50; font-size: 5px; background: #111315; border-radius: 1px; }
.dims { margin-left: auto; padding-right: 18px; display: flex; gap: 6px; font-size: 5px; }

.markups { height: 89px; flex: none; display: flex; flex-direction: column; background: #1a1c1e; }
.mbar { height: 11px; flex: none; display: flex; align-items: center; gap: 2px; }
.collapse { width: 14px; text-align: center; color: #aaa; font-size: 6px; }
.collapse.end { margin-left: auto; width: 12px; }
.mbar strong { margin-left: 5px; font-size: 6px; color: #ddd; font-weight: bold; }
.ftools { flex: none; margin-left: 2px; }
.search { width: 118px; height: 7px; display: flex; align-items: center; justify-content: space-between; border: .5px solid #555; padding: 0 2px; font-size: 5px; margin-left: 2px; }
.mbody { flex: 1; min-height: 0; display: flex; }
.mrail { width: 14px; flex: none; display: flex; flex-direction: column; align-items: center; gap: 7px; background: #1c1e20; }
.mrail-on { width: 14px; height: 14px; display: flex; align-items: center; justify-content: center; background: #0f5f92; }
.tablewrap { flex: 1; min-width: 0; overflow: hidden; display: flex; }
.list { width: 986px; height: 78px; flex: none; table-layout: fixed; border-collapse: collapse; font-size: 5px; color: #c4c4c4; }
.c-subj { width: 80px; } .c-page { width: 37px; } .c-com { width: 87px; } .c-auth { width: 37px; } .c-date { width: 49px; } .c-stat { width: 51px; } .c-color { width: 33px; } .c-layer { width: 48px; }
.list th { height: 14px; text-align: left; font-weight: bold; background: #3a3c3e; color: #ddd; padding: 0 0 0 4px; border-right: .5px solid #222; white-space: nowrap; position: relative; }
.list th:first-child { padding-left: 12px; border-bottom: 1px solid #1a7ab8; }
.box { position: absolute; left: 2px; top: 4px; width: 5px; height: 5px; border: .7px solid #aaa; }
.sort { position: absolute; right: 5px; top: 5px; font-style: normal; }
.statusicon { position: absolute; right: 4px; top: 3px; font-style: normal; }
.list td { padding: 0 0 0 1px; vertical-align: top; line-height: 6px; border-right: .5px solid #26282a; overflow: hidden; }
.list td:nth-child(7) { text-align: center; }
.list td:nth-child(8) { padding-left: 1px; }
.list td:nth-child(8) svg { margin-right: 1px; }
.list td:last-child { border-right: 0; }
.group td { height: 6px; padding-left: 2px; font-weight: bold; line-height: 6px; border-right: 0; }
.r8 td { height: 8px; line-height: 8px; }
.r14 td { height: 14px; line-height: 6px; padding-top: 2px; }
.r6 td { height: 6px; line-height: 6px; }
.sel td { height: 14px; background: #0e5a86; color: #e4e4e4; line-height: 6px; padding-top: 1px; }
.list td.sub { padding-left: 21px; white-space: nowrap; }
.ic { width: 10px; height: 8px; vertical-align: -2px; margin-right: 1px; }
.dot { display: inline-block; width: 5px; height: 5px; background: #e8001a; vertical-align: -1px; }
.vscroll { width: 5px; flex: none; background: #bcbcbc; border-top: 4px solid #e0e0e0; height: 78px; }

.palette { position: absolute; left: 277px; top: 28px; filter: blur(.3px); }

/* floor plan */
.wall { fill: none; stroke: #3c3c3c; stroke-width: .9; }
.wall-heavy { fill: none; stroke: #2e2e2e; stroke-width: 1.3; }
.dash path, .dash rect { stroke-dasharray: 3 .8; stroke-width: 1.1; }
.thin { fill: none; stroke: #777; stroke-width: .5; }
.grid-dark { fill: none; stroke: #555; stroke-width: .8; stroke-dasharray: 9 2 2 2; }
.grid-light { fill: none; stroke: #b5b5b5; stroke-width: .7; stroke-dasharray: 9 2 2 2; }
.ring { fill: none; stroke: #8c8c8c; stroke-width: .6; stroke-dasharray: 3 1; }
.inner-ring { fill: none; stroke: #a8a8a8; stroke-width: 1.3; }
.m-cyan { fill: #aef5f6; stroke: #5f8fe0; stroke-width: .6; stroke-dasharray: 1 1; }
.m-yellow { fill: #fbf08a; stroke: #e8cc60; stroke-width: .5; stroke-dasharray: 1 1; }
.lbl text { font-size: 3.1px; font-weight: bold; text-anchor: middle; text-decoration: underline; fill: #333; }
.lead { fill: none; stroke: #f0a585; stroke-width: .7; }
.dotted { fill: none; stroke: #f49a80; stroke-width: .7; stroke-dasharray: 1 1; }
.blue-lead { fill: none; stroke: #6f93dc; stroke-width: .7; }
.cloud { fill: none; stroke: #f09088; stroke-width: .7; stroke-dasharray: 1.4 .7; }
.n-y { fill: #fbf08a; }
.n-c { fill: #aef5f6; }
.note { font-size: 3.8px; fill: #444; }
.note-red text { font-size: 3.8px; fill: #ee2a2a; }
```
